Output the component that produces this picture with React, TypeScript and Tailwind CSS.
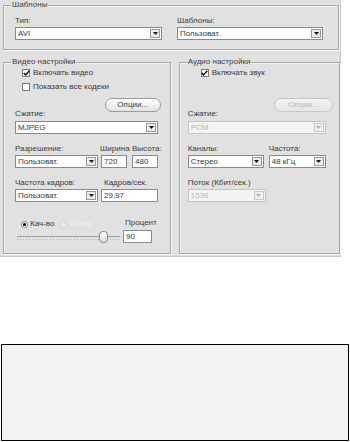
import React from "react";

const Arrow = ({ disabled }: { disabled?: boolean }) => (
  <div
    className={`mr-[1px] flex h-[9px] w-[10px] items-center justify-center border ${
      disabled ? "border-[#c8c8c8] bg-[#eeeeee]" : "border-[#9a9a9a] bg-[#ececec]"
    }`}
  >
    <svg width="5" height="3" viewBox="0 0 5 3">
      <path d="M0 0h5L2.5 3z" fill={disabled ? "#b0b0b0" : "#111"} />
    </svg>
  </div>
);

const Select = ({ w, value, disabled }: { w: string; value: string; disabled?: boolean }) => (
  <div
    className={`flex h-[13px] items-center border pl-[2px] ${w} ${
      disabled ? "border-[#c4c4c4] bg-[#f4f4f4] text-[#b4b4b4]" : "border-[#8a8a8a] bg-white text-[#3a3a3a]"
    }`}
  >
    <span className="flex-1 truncate">{value}</span>
    <Arrow disabled={disabled} />
  </div>
);

const Input = ({ w, value }: { w: string; value: string }) => (
  <div className={`flex h-[13px] items-center border border-[#8a8a8a] bg-white pl-[2px] text-[#3a3a3a] ${w}`}>
    {value}
  </div>
);

const Check = ({ label, checked }: { label: string; checked?: boolean }) => (
  <div className="flex h-[12px] items-center gap-[3px]">
    <div className="relative flex h-[8px] w-[8px] items-center justify-center border border-[#7a7a7a] bg-white">
      {checked && (
        <svg width="7" height="6" viewBox="0 0 7 6" className="absolute">
          <path d="M0.8 3l1.8 1.9L6.3 0.8" stroke="#111" strokeWidth="1.5" fill="none" />
        </svg>
      )}
    </div>
    <span className="text-[#3a3a3a]">{label}</span>
  </div>
);

const OptionsButton = ({ disabled }: { disabled?: boolean }) => (
  <div
    className={`flex h-[14px] items-center justify-center rounded-[7px] border bg-gradient-to-b ${
      disabled
        ? "w-[59px] border-[#c6c6c6] from-[#f4f4f4] to-[#e6e6e6] text-[#b8b8b8]"
        : "w-[56px] border-[#9a9a9a] from-white to-[#e4e4e4] text-[#3a3a3a]"
    }`}
  >
    Опции...
  </div>
);

const Group = ({ title, className, children }: { title: string; className: string; children: React.ReactNode }) => (
  <fieldset className={`border border-[#a8a8a8] shadow-[inset_1px_1px_0_#f6f6f6,1px_1px_0_#f6f6f6] ${className}`}>
    <legend className="ml-[7px] px-[1px] leading-[10px] text-[#3a3a3a]">{title}</legend>
    {children}
  </fieldset>
);

const Label = ({ children, className = "" }: { children: React.ReactNode; className?: string }) => (
  <div className={`h-[10px] leading-[10px] text-[#3a3a3a] ${className}`}>{children}</div>
);

export default function App() {
  return (
    <div className="h-[442px] w-[350px] overflow-hidden bg-white font-['Liberation_Sans',Arial,sans-serif] text-[8px]">
      <div className="w-[341px] border-r border-b border-[#c6c6c6] bg-[#e1e1e1] pb-[2px] pl-[3px]">
        <Group title="Шаблоны" className="w-[336px] pb-[9px]">
          <div className="flex pt-[6px] pl-[11px]">
            <div className="w-[162px]">
              <Label className="mb-[1px]">Тип:</Label>
              <Select w="w-[147px]" value="AVI" />
            </div>
            <div>
              <Label className="mb-[1px]">Шаблоны:</Label>
              <Select w="w-[146px]" value="Пользоват." />
            </div>
          </div>
        </Group>

        <div className="mt-[7px] flex gap-[8px]">
          <Group title="Видео настройки" className="h-[197px] w-[165px]">
            <div className="pl-[11px] pr-[8px]">
              <div className="ml-[7px]">
                <Check label="Включать видео" checked />
                <div className="mt-[2px]">
                  <Check label="Показать все кодеки" />
                </div>
              </div>
              <div className="mt-[5px] flex h-[21px] justify-between">
                <Label className="self-end">Сжатие:</Label>
                <div className="mr-[1px]">
                  <OptionsButton />
                </div>
              </div>
              <div className="mt-[2px]">
                <Select w="w-[143px]" value="MJPEG" />
              </div>

              <div className="mt-[10px] flex">
                <Label className="w-[85px]">Разрешение:</Label>
                <Label className="w-[32px]">Ширина</Label>
                <Label>Высота:</Label>
              </div>
              <div className="mt-[1px] flex">
                <Select w="w-[83px]" value="Пользоват." />
                <div className="ml-[3px]">
                  <Input w="w-[26px]" value="720" />
                </div>
                <div className="ml-[5px]">
                  <Input w="w-[26px]" value="480" />
                </div>
              </div>

              <div className="mt-[10px] flex">
                <Label className="w-[89px]">Частота кадров:</Label>
                <Label>Кадров/сек.</Label>
              </div>
              <div className="mt-[1px] flex">
                <Select w="w-[83px]" value="Пользоват." />
                <div className="ml-[3px]">
                  <Input w="w-[57px]" value="29,97" />
                </div>
              </div>

              <div className="mt-[16px] flex">
                <div className="w-[108px]">
                  <div className="ml-[6px] flex h-[12px] items-center">
                    <div className="flex h-[7px] w-[7px] items-center justify-center rounded-full border border-[#7a7a7a] bg-white">
                      <div className="h-[3px] w-[3px] rounded-full bg-black" />
                    </div>
                    <span className="ml-[2px] text-[#3a3a3a]">Кач-во</span>
                    <div className="ml-[6px] h-[7px] w-[7px] rounded-full border border-[#cfcfcf] bg-[#eeeeee]" />
                    <span className="ml-[2px] text-[#f2f2f2]">Поток</span>
                  </div>
                  <div className="relative ml-[2px] mt-[1px] h-[13px] w-[103px]">
                    <div className="absolute top-[5px] left-0 h-[1px] w-full bg-[#a0a0a0]" />
                    <div className="absolute top-[8px] left-0 h-[1px] w-full bg-[repeating-linear-gradient(90deg,#b0b0b0_0_1px,transparent_1px_3px)]" />
                    <div className="absolute top-0 left-[82px] h-[12px] w-[9px] rounded-[4px] border border-[#8a8a8a] bg-gradient-to-b from-white to-[#dcdcdc]" />
                  </div>
                </div>
                <div>
                  <Label className="ml-[2px]">Процент</Label>
                  <div className="mt-[2px]">
                    <Input w="w-[29px]" value="90" />
                  </div>
                </div>
              </div>
            </div>
          </Group>

          <Group title="Аудио настройки" className="h-[197px] w-[164px]">
            <div className="pl-[8px] pr-[6px]">
              <div className="ml-[13px]">
                <Check label="Включать звук" checked />
              </div>
              <div className="mt-[19px] flex h-[21px] justify-between">
                <Label className="self-end">Сжатие:</Label>
                <OptionsButton disabled />
              </div>
              <div className="mt-[2px]">
                <Select w="w-[138px]" value="PCM" disabled />
              </div>

              <div className="mt-[10px] flex">
                <Label className="w-[81px]">Каналы:</Label>
                <Label>Частота:</Label>
              </div>
              <div className="mt-[1px] flex">
                <Select w="w-[76px]" value="Стерео" />
                <div className="ml-[5px]">
                  <Select w="w-[57px]" value="48 кГц" />
                </div>
              </div>

              <Label className="mt-[10px]">Поток (Кбит/сек.)</Label>
              <div className="mt-[1px]">
                <Select w="w-[78px]" value="1536" disabled />
              </div>
            </div>
          </Group>
        </div>
      </div>

      <div className="mt-[87px] ml-[1px] h-[97px] w-[348px] border border-black bg-[#f2f2f2]" />
    </div>
  );
}
